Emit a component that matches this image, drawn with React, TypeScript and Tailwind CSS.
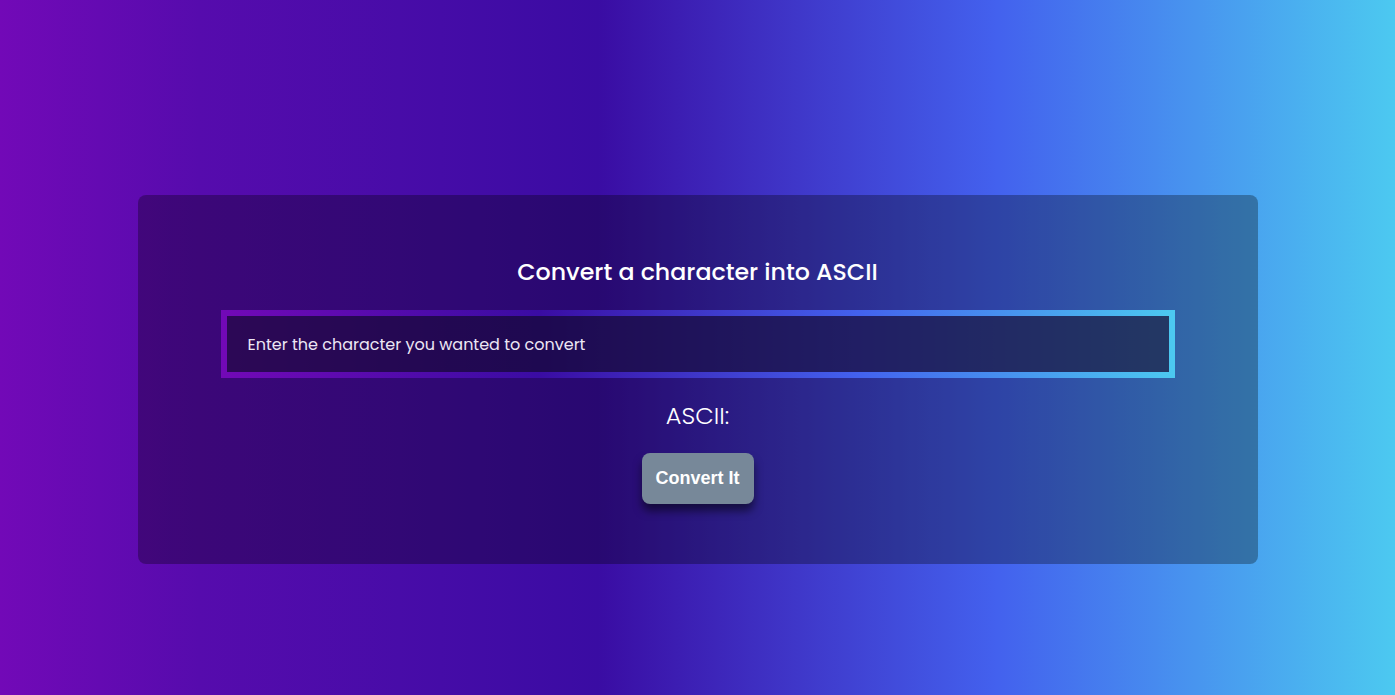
export default function App() {
  return (
    <div className="min-h-screen w-full h-[695px] bg-[linear-gradient(to_right,#7209b7,#560bad,#480ca8,#3a0ca3,#3f37c9,#4361ee,#4895ef,#4cc9f0)] flex justify-center pt-[195px]">
      <div className="w-[1120px] h-[369px] rounded-lg bg-black/30 flex flex-col items-center pt-[59px]" style={{ fontFamily: "Poppins, 'Open Sans', sans-serif" }}>
        <h1 className="text-[23.7px] leading-[36px] font-medium text-white">
          Convert a character into ASCII
        </h1>
        <div className="mt-[20px] w-[954px] h-[68px] p-[6px] bg-[linear-gradient(to_right,#7209b7,#3a0ca3,#4361ee,#4cc9f0)]">
          <input
            className="w-full h-full bg-[#150835]/75 outline-none px-[21px] text-[16px] text-[#ece6f4] placeholder:text-[#ece6f4]"
            placeholder="Enter the character you wanted to convert"
          />
        </div>
        <p className="mt-[20px] text-[24px] leading-[36px] font-light text-white">ASCII:</p>
        <button className="mt-[19px] w-[112px] h-[51px] rounded-lg bg-[#778899] text-white text-[18px] font-bold shadow-[0_7px_8px_rgba(0,0,0,0.5)]" style={{ fontFamily: "'Liberation Sans', Arial, sans-serif" }}>
          Convert It
        </button>
      </div>
    </div>
  );
}
